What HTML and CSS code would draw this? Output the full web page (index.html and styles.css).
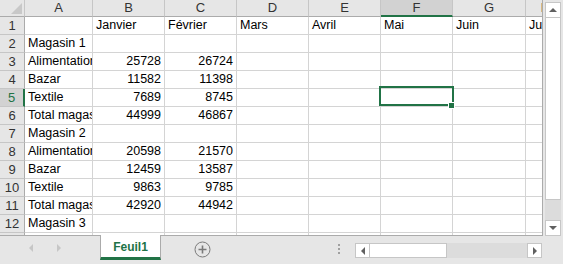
FILE: index.html
```html
<!DOCTYPE html>
<html lang="fr">
<head>
  <meta charset="UTF-8">
  <meta name="viewport" content="width=device-width, initial-scale=1.0">
  <title>Classeur</title>
  <link rel="stylesheet" href="styles.css">
</head>
<body>
  <div class="app">
    <div class="main">
      <div class="sheet">
        <div class="row head">
          <div class="corner"></div>
          <div class="col">A</div><div class="col">B</div><div class="col">C</div><div class="col">D</div>
          <div class="col">E</div><div class="col sel">F</div><div class="col">G</div><div class="col">H</div>
        </div>
        <div class="row">
          <div class="rh">1</div><div class="c"></div><div class="c">Janvier</div><div class="c">Février</div><div class="c">Mars</div>
          <div class="c">Avril</div><div class="c">Mai</div><div class="c">Juin</div><div class="c">Juillet</div>
        </div>
        <div class="row">
          <div class="rh">2</div><div class="c">Magasin 1</div><div class="c"></div><div class="c"></div><div class="c"></div>
          <div class="c"></div><div class="c"></div><div class="c"></div><div class="c"></div>
        </div>
        <div class="row">
          <div class="rh">3</div><div class="c">Alimentation</div><div class="c n">25728</div><div class="c n">26724</div><div class="c"></div>
          <div class="c"></div><div class="c"></div><div class="c"></div><div class="c"></div>
        </div>
        <div class="row">
          <div class="rh">4</div><div class="c">Bazar</div><div class="c n">11582</div><div class="c n">11398</div><div class="c"></div>
          <div class="c"></div><div class="c"></div><div class="c"></div><div class="c"></div>
        </div>
        <div class="row">
          <div class="rh sel">5</div><div class="c">Textile</div><div class="c n">7689</div><div class="c n">8745</div><div class="c"></div>
          <div class="c"></div><div class="c active"></div><div class="c"></div><div class="c"></div>
        </div>
        <div class="row">
          <div class="rh">6</div><div class="c">Total magasin 1</div><div class="c n">44999</div><div class="c n">46867</div><div class="c"></div>
          <div class="c"></div><div class="c"></div><div class="c"></div><div class="c"></div>
        </div>
        <div class="row">
          <div class="rh">7</div><div class="c">Magasin 2</div><div class="c"></div><div class="c"></div><div class="c"></div>
          <div class="c"></div><div class="c"></div><div class="c"></div><div class="c"></div>
        </div>
        <div class="row">
          <div class="rh">8</div><div class="c">Alimentation</div><div class="c n">20598</div><div class="c n">21570</div><div class="c"></div>
          <div class="c"></div><div class="c"></div><div class="c"></div><div class="c"></div>
        </div>
        <div class="row">
          <div class="rh">9</div><div class="c">Bazar</div><div class="c n">12459</div><div class="c n">13587</div><div class="c"></div>
          <div class="c"></div><div class="c"></div><div class="c"></div><div class="c"></div>
        </div>
        <div class="row">
          <div class="rh">10</div><div class="c">Textile</div><div class="c n">9863</div><div class="c n">9785</div><div class="c"></div>
          <div class="c"></div><div class="c"></div><div class="c"></div><div class="c"></div>
        </div>
        <div class="row">
          <div class="rh">11</div><div class="c">Total magasin 2</div><div class="c n">42920</div><div class="c n">44942</div><div class="c"></div>
          <div class="c"></div><div class="c"></div><div class="c"></div><div class="c"></div>
        </div>
        <div class="row">
          <div class="rh">12</div><div class="c">Magasin 3</div><div class="c"></div><div class="c"></div><div class="c"></div>
          <div class="c"></div><div class="c"></div><div class="c"></div><div class="c"></div>
        </div>
        <div class="row">
          <div class="rh">13</div><div class="c"></div><div class="c"></div><div class="c"></div><div class="c"></div>
          <div class="c"></div><div class="c"></div><div class="c"></div><div class="c"></div>
        </div>
      </div>
      <div class="vscroll">
        <div class="sb-btn"><span class="tri up"></span></div>
        <div class="sb-thumb v"></div>
        <div class="sb-track"></div>
        <div class="sb-btn"><span class="tri down"></span></div>
      </div>
    </div>
    <div class="tabbar">
      <div class="nav">
        <span class="tri left light"></span>
        <span class="tri right light"></span>
      </div>
      <div class="tab">Feuil1</div>
      <div class="add">
        <svg width="17" height="17" viewBox="0 0 17 17">
          <circle cx="8.5" cy="8.5" r="7.5" fill="none" stroke="#7a7a7a" stroke-width="1"/>
          <path d="M8.5 4.5v8M4.5 8.5h8" stroke="#7a7a7a" stroke-width="1.6"/>
        </svg>
      </div>
      <div class="dots"><i></i><i></i><i></i></div>
      <div class="hscroll">
        <div class="sb-btn h"><span class="tri left"></span></div>
        <div class="sb-thumb h"></div>
        <div class="sb-track h"></div>
        <div class="sb-btn h"><span class="tri right"></span></div>
      </div>
    </div>
  </div>
</body>
</html>
```
FILE: styles.css
```css
body {
  margin: 0;
  font-family: "Liberation Sans", Arial, sans-serif;
  background-color: #e6e6e6;
  overflow: hidden;
}
.app {
  width: 563px;
  height: 264px;
  display: flex;
  flex-direction: column;
}
.main {
  display: flex;
  height: 236px;
}
.sheet {
  width: 542px;
  height: 235px;
  overflow: hidden;
  background-color: #fff;
  border-right: 1px solid #ababab;
  border-bottom: 1px solid #ababab;
}
.row {
  display: grid;
  grid-template-columns: 25px 68px 72px 72px 72px 72px 72px 73px 40px;
  height: 18px;
}
.row > div {
  box-sizing: border-box;
  border-right: 1px solid #d4d4d4;
  border-bottom: 1px solid #d4d4d4;
  white-space: nowrap;
  overflow: hidden;
}
.row.head {
  height: 17px;
  background-color: #e6e6e6;
}
.row.head > div {
  border-right-color: #c6c6c6;
  border-bottom-color: #ababab;
  font-size: 13px;
  line-height: 16px;
  text-align: center;
  color: #333;
}
.corner {
  position: relative;
}
.corner::after {
  content: "";
  position: absolute;
  right: 2px;
  bottom: 2px;
  border-left: 11px solid transparent;
  border-bottom: 11px solid #c8c8c8;
}
.col.sel {
  background-color: #d2d2d2;
  color: #217346;
  border-bottom: 2px solid #217346 !important;
}
.rh {
  background-color: #e6e6e6;
  border-right-color: #ababab !important;
  border-bottom-color: #c6c6c6 !important;
  font-size: 13px;
  line-height: 17px;
  text-align: center;
  color: #333;
}
.rh.sel {
  background-color: #d2d2d2;
  color: #217346;
  border-right: 2px solid #217346 !important;
}
.c {
  font-size: 12.5px;
  line-height: 17px;
  padding: 0 3px;
  color: #000;
}
.c.n {
  text-align: right;
}
.c.active {
  position: relative;
  overflow: visible !important;
}
.c.active::before {
  content: "";
  position: absolute;
  left: -2px;
  top: -3px;
  width: 71px;
  height: 16px;
  border: 2px solid #217346;
}
.c.active::after {
  content: "";
  position: absolute;
  right: -3px;
  bottom: -3px;
  width: 5px;
  height: 5px;
  background-color: #217346;
  border: 1px solid #fff;
}

/* barres de défilement */
.vscroll {
  width: 20px;
  display: flex;
  flex-direction: column;
  padding: 2px 0 0 2px;
  box-sizing: border-box;
}
.sb-btn {
  box-sizing: border-box;
  width: 16px;
  height: 16px;
  background-color: #fff;
  border: 1px solid #c6c6c6;
  display: flex;
  align-items: center;
  justify-content: center;
}
.sb-thumb.v {
  width: 16px;
  height: 182px;
  box-sizing: border-box;
  background-color: #fff;
  border: 1px solid #c6c6c6;
  border-top: none;
}
.sb-track {
  flex: 1;
  width: 16px;
  background-color: #dcdcdc;
}
.tri {
  width: 0;
  height: 0;
  border: 4px solid transparent;
}
.tri.up {
  border-top: none;
  border-bottom: 4px solid #606060;
}
.tri.down {
  border-bottom: none;
  border-top: 4px solid #606060;
}
.tri.left {
  border-left: none;
  border-right: 4px solid #606060;
}
.tri.right {
  border-right: none;
  border-left: 4px solid #606060;
}
.tri.light.left {
  border-right-color: #c6c6c6;
}
.tri.light.right {
  border-left-color: #c6c6c6;
}

/* barre des onglets */
.tabbar {
  height: 28px;
  display: flex;
  align-items: flex-start;
}
.nav {
  width: 100px;
  height: 24px;
  display: flex;
  align-items: center;
  gap: 24px;
  padding-left: 29px;
  box-sizing: border-box;
}
.tab {
  box-sizing: border-box;
  width: 61px;
  height: 25px;
  background-color: #fff;
  border-left: 1px solid #ababab;
  border-right: 1px solid #ababab;
  border-bottom: 3px solid #217346;
  margin-top: -1px;
  font-size: 12px;
  font-weight: bold;
  color: #217346;
  text-align: center;
  line-height: 24px;
}
.add {
  margin: 5px 0 0 33px;
  height: 17px;
}
.dots {
  margin: 8px 0 0 127px;
  display: flex;
  flex-direction: column;
  gap: 2px;
}
.dots i {
  width: 2px;
  height: 2px;
  background-color: #a0a0a0;
}
.hscroll {
  display: flex;
  margin: 7px 0 0 15px;
  height: 15px;
}
.sb-btn.h {
  width: 15px;
  height: 15px;
}
.sb-thumb.h {
  width: 77px;
  height: 15px;
  box-sizing: border-box;
  background-color: #fff;
  border: 1px solid #c6c6c6;
  border-left: none;
}
.sb-track.h {
  flex: none;
  width: 80px;
  height: 15px;
}
```
